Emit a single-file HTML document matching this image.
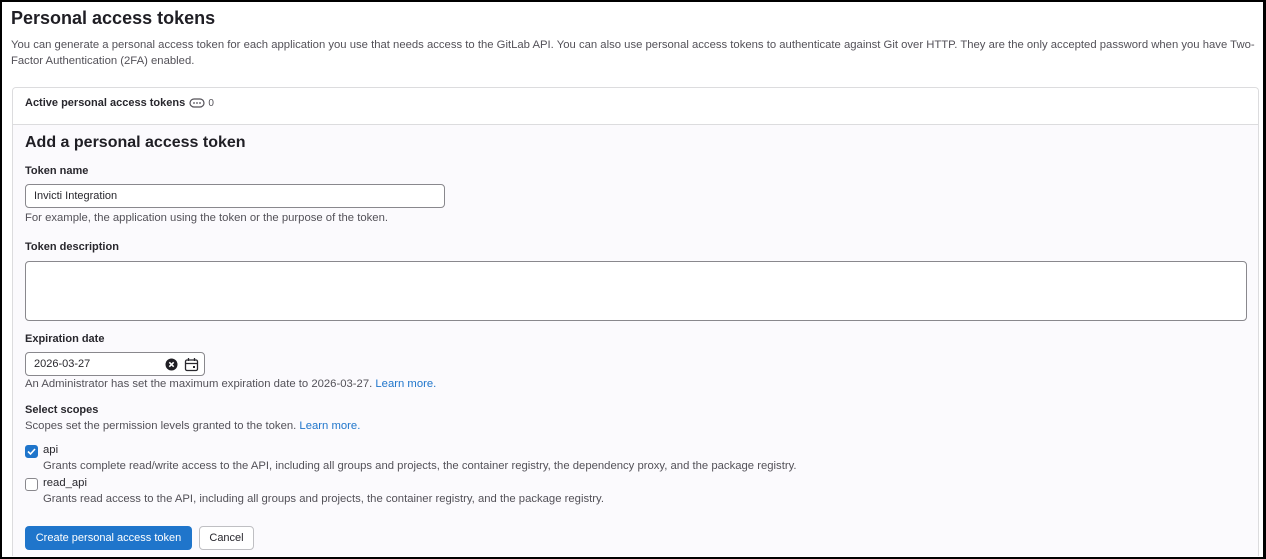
<!DOCTYPE html>
<html><head><style>
*{box-sizing:border-box;margin:0;padding:0}
html,body{width:1266px;height:559px;overflow:hidden;background:#fff}
body{font-family:"Liberation Sans",sans-serif;color:#28272d;position:relative;border:2px solid #000;border-right-width:3px}
.abs{position:absolute}
h1{position:absolute;left:9px;top:6px;font-size:18px;font-weight:bold;color:#1f1e24}
.intro{position:absolute;left:9px;top:35px;width:1258px;font-size:11.3px;line-height:16px;color:#535158}
.card{position:absolute;left:10px;top:85px;width:1247px;height:469px;border:1px solid #dcdcde;border-bottom:0;border-radius:4px 4px 0 0;background:#fbfafd;overflow:hidden}
.ch{height:37px;background:#fff;border-bottom:1px solid #dcdcde;padding:9px 12px;font-size:11px;font-weight:bold}
.lbl{position:absolute;left:12px;font-size:11px;font-weight:bold;color:#28272d}
.help{position:absolute;left:12px;font-size:11.3px;color:#535158}
.inp{position:absolute;left:12px;border:1px solid #89888d;border-radius:4px;background:#fff;font-size:11px;padding:0 8px;display:flex;align-items:center;color:#28272d}
a{color:#1f75cb;text-decoration:none}
.cb{position:absolute;left:12px;width:13px;height:13px;border:1px solid #89888d;border-radius:3px;background:#fff}
</style></head><body>
<h1>Personal access tokens</h1>
<div class="intro">You can generate a personal access token for each application you use that needs access to the GitLab API. You can also use personal access tokens to authenticate against Git over HTTP. They are the only accepted password when you have Two-Factor Authentication (2FA) enabled.</div>
<div class="card">
<div class="ch">Active personal access tokens <svg width="16" height="10" viewBox="0 0 16 10" style="vertical-align:-2px;margin-left:1px"><rect x="1" y="1" width="14" height="8" rx="4" fill="none" stroke="#535158" stroke-width="1.2"/><circle cx="5" cy="5" r=".9" fill="#535158"/><circle cx="8" cy="5" r=".9" fill="#535158"/><circle cx="11" cy="5" r=".9" fill="#535158"/></svg> <span style="font-weight:normal;color:#535158;font-size:10px">0</span></div>
<div class="abs" style="left:12px;top:46px;font-size:16px;font-weight:bold;color:#1f1e24">Add a personal access token</div>
<div class="lbl" style="top:77px">Token name</div>
<div class="inp" style="top:96px;width:420px;height:24px">Invicti Integration</div>
<div class="help" style="top:124px">For example, the application using the token or the purpose of the token.</div>
<div class="lbl" style="top:153px">Token description</div>
<div class="inp" style="top:173px;width:1222px;height:60px"></div>
<div class="lbl" style="top:245px">Expiration date</div>
<div class="inp" style="top:264px;width:180px;height:24px">2026-03-27
<svg class="abs" style="left:139px;top:5px" width="13" height="13" viewBox="0 0 13 13"><circle cx="6.5" cy="6.5" r="6" fill="#1f1e24"/><path d="M4.3 4.3l4.4 4.4M8.7 4.3l-4.4 4.4" stroke="#fff" stroke-width="1.5"/></svg>
<svg class="abs" style="left:158px;top:4px" width="15" height="15" viewBox="0 0 15 15"><rect x="1.5" y="3" width="12" height="10.5" rx="1.5" fill="none" stroke="#28272d" stroke-width="1.3"/><path d="M1.5 6.5h12M4.5 1v3M10.5 1v3" stroke="#28272d" stroke-width="1.3"/><rect x="9" y="9" width="2" height="2" fill="#28272d"/></svg></div>
<div class="help" style="top:290px">An Administrator has set the maximum expiration date to 2026-03-27. <a>Learn more.</a></div>
<div class="lbl" style="top:316px">Select scopes</div>
<div class="help" style="top:332px">Scopes set the permission levels granted to the token. <a>Learn more.</a></div>
<div class="cb" style="top:357px;background:#1f75cb;border-color:#1f75cb"><svg width="11" height="11" viewBox="0 0 11 11" style="position:absolute;left:0;top:0"><path d="M2 5.5l2.5 2.5 4.5-5" fill="none" stroke="#fff" stroke-width="1.6"/></svg></div>
<div class="abs" style="left:30px;top:356px;font-size:11.3px">api</div>
<div class="help" style="left:30px;top:372px">Grants complete read/write access to the API, including all groups and projects, the container registry, the dependency proxy, and the package registry.</div>
<div class="cb" style="top:390px"></div>
<div class="abs" style="left:30px;top:389px;font-size:11.3px">read_api</div>
<div class="help" style="left:30px;top:405px">Grants read access to the API, including all groups and projects, the container registry, and the package registry.</div>
<div class="abs" style="left:12px;top:438px;width:167px;height:24px;background:#1f75cb;border-radius:4px;color:#fff;font-size:11px;display:flex;align-items:center;justify-content:center">Create personal access token</div>
<div class="abs" style="left:186px;top:438px;width:55px;height:24px;background:#fff;border:1px solid #bfbfc3;border-radius:4px;font-size:11px;display:flex;align-items:center;justify-content:center">Cancel</div>
</div>
</body></html>
